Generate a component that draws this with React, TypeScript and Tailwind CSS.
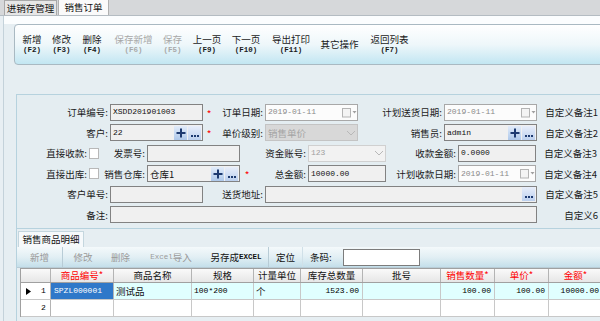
import React from "react";

const CJK = "font-['Noto_Sans_CJK_SC','Noto_Sans',sans-serif]";
const MONO = "font-['Liberation_Mono','Noto_Sans_CJK_SC',monospace]";

function Lbl({ cls, t }: { cls: string; t: string }) {
  return (
    <div className={`${cls} shrink-0 text-right pr-[2px] text-[9.5px] leading-[12px] text-[#1a1a1a] whitespace-nowrap`}>
      {t}
    </div>
  );
}

function Star({ cls }: { cls: string }) {
  return <div className={`${cls} shrink-0 text-center text-[10px] leading-[10px] text-[#ff0000] pt-[3px]`}>*</div>;
}

function Plus() {
  return (
    <div className="w-[13px] h-[14px] bg-gradient-to-b from-[#e2ecfa] to-[#aec8ea] flex items-center justify-center">
      <svg width="10" height="10" viewBox="0 0 10 10">
        <path d="M5 0.5v9M0.5 5h9" stroke="#1d3a70" strokeWidth="2" />
      </svg>
    </div>
  );
}

function Dots() {
  return (
    <div className="w-[13px] h-[14px] bg-gradient-to-b from-[#e8eefa] to-[#bcd0ee] flex items-end justify-center pb-[3px] gap-[1px]">
      <div className="w-[2px] h-[2px] bg-[#1d3a70]" />
      <div className="w-[2px] h-[2px] bg-[#1d3a70]" />
      <div className="w-[2px] h-[2px] bg-[#1d3a70]" />
    </div>
  );
}

function CalIcon() {
  return (
    <svg width="16" height="11" viewBox="0 0 16 11" className="shrink-0">
      <rect x="1.5" y="1.5" width="8" height="8.5" fill="#f4f4f4" stroke="#b4b4b4" />
      <path d="M11.5 4h4l-2 2.5z" fill="#a0a0a0" />
    </svg>
  );
}

function Chev() {
  return (
    <svg width="12" height="8" viewBox="0 0 12 8" className="shrink-0">
      <path d="M2 2l4 4 4-4" fill="none" stroke="#b8b8b8" strokeWidth="1" />
    </svg>
  );
}

function Field({ cls, children }: { cls: string; children?: React.ReactNode }) {
  return (
    <div className={`${cls} shrink-0 h-[17px] border border-[#828282] bg-[#f0f0f0] flex items-center pl-[2px] pr-[1px] overflow-hidden`}>
      {children}
    </div>
  );
}

function Val({ t }: { t: string }) {
  return <span className={`${MONO} text-[8px] leading-[10px] text-[#111] flex-1 whitespace-nowrap`}>{t}</span>;
}

function DateF({ cls }: { cls: string }) {
  return (
    <div className={`${cls} shrink-0 h-[17px] border border-[#a8a8a8] bg-[#fcfcfc] flex items-center pl-[2px] overflow-hidden`}>
      <span className={`${MONO} text-[8px] leading-[10px] text-[#8a8a8a] flex-1 whitespace-nowrap`}>2019-01-11</span>
      <CalIcon />
    </div>
  );
}

function Check() {
  return <div className="w-[10px] h-[11px] shrink-0 border border-[#b8b8b8] bg-white" />;
}

function RightLbl({ t }: { t: string }) {
  return (
    <div className="w-[61px] shrink-0 text-right text-[9.5px] leading-[12px] text-[#1a1a1a] whitespace-nowrap">{t}</div>
  );
}

function TB({ cls, a, b, dis }: { cls: string; a: string; b?: string; dis?: boolean }) {
  const c = dis ? "text-[#a8a8a8]" : "text-[#1a1a1a]";
  return (
    <div className={`${cls} shrink-0 flex flex-col items-center justify-center ${c}`}>
      <div className="h-[11.5px] text-[9.5px] leading-[11.5px] whitespace-nowrap">{a}</div>
      {b && <div className={`${MONO} h-[9px] text-[7.5px] leading-[9px] font-bold whitespace-nowrap`}>{b}</div>}
    </div>
  );
}

function Row({ children }: { children: React.ReactNode }) {
  return <div className="h-[20.5px] flex items-center">{children}</div>;
}

export default function App() {
  return (
    <div className={`${CJK} w-[600px] h-[321px] overflow-hidden bg-[#e8eff3] flex flex-col`}>
      {/* tab bar */}
      <div className="h-[16px] shrink-0 bg-[#d6d8da] border-b border-[#b4bcc2] flex items-end pl-[4px]">
        <div className="h-[15px] w-[53px] border border-b-0 border-[#a8a8a8] bg-[#e6e6e6] text-[9.5px] leading-[14px] text-center text-[#111]">
          进销存管理
        </div>
        <div className="h-[16px] w-[51px] ml-[1px] border border-b-0 border-[#b0b0b0] bg-[#fafafa] text-[9.5px] leading-[15px] text-center text-[#111]">
          销售订单
        </div>
      </div>

      <div className="flex-1 ml-[3px] border-l border-[#c4d2da] bg-[#e6eef2] flex flex-col">
        <div className="h-[8px] shrink-0 bg-[#fbfdfe]" />
        {/* main toolbar */}
        <div className="h-[41px] w-[600px] shrink-0 ml-[10px] rounded-l-[4px] border border-[#a9b9c2] bg-gradient-to-b from-[#ffffff] via-[#eef7fa] to-[#c2e6f2] flex items-center pl-[3px]">
          <TB cls="w-[28px]" a="新增" b="(F2)" />
          <TB cls="w-[31px]" a="修改" b="(F3)" />
          <TB cls="w-[30px]" a="删除" b="(F4)" />
          <TB cls="w-[53px]" a="保存新增" b="(F6)" dis />
          <TB cls="w-[25px]" a="保存" b="(F5)" dis />
          <TB cls="w-[44px]" a="上一页" b="(F9)" />
          <TB cls="w-[34px]" a="下一页" b="(F10)" />
          <TB cls="w-[56px]" a="导出打印" b="(F11)" />
          <TB cls="w-[41px]" a="其它操作" />
          <TB cls="w-[59px]" a="返回列表" b="(F7)" />
        </div>
        <div className="h-[29px] shrink-0" />

        {/* form panel */}
        <div className="h-[135px] w-[600px] shrink-0 ml-[12px] border border-[#b6d2de] bg-[#e4edf1] pt-[7px]">
          <Row>
            <Lbl cls="w-[93px]" t="订单编号:" />
            <Field cls="w-[93px]"><Val t="XSDD201901003" /></Field>
            <Star cls="w-[12px]" />
            <Lbl cls="w-[50px]" t="订单日期:" />
            <DateF cls="w-[93px]" />
            <Lbl cls="w-[86px]" t="计划送货日期:" />
            <DateF cls="w-[93px]" />
            <RightLbl t="自定义备注1" />
          </Row>
          <Row>
            <Lbl cls="w-[93px]" t="客户:" />
            <Field cls="w-[93px]"><Val t="22" /><Plus /><div className="w-[1px]" /><Dots /></Field>
            <Star cls="w-[12px]" />
            <Lbl cls="w-[50px]" t="单价级别:" />
            <div className="w-[93px] h-[17px] shrink-0 border border-[#c4c4c4] bg-[#d8d8d8] flex items-center pl-[2px]">
              <span className="flex-1 text-[9.5px] leading-[12px] text-[#a4a4a4]">销售单价</span>
              <Chev />
            </div>
            <Lbl cls="w-[86px]" t="销售员:" />
            <Field cls="w-[93px]"><Val t="admin" /><Plus /><div className="w-[1px]" /><Dots /></Field>
            <RightLbl t="自定义备注2" />
          </Row>
          <Row>
            <Lbl cls="w-[72px]" t="直接收款:" />
            <Check />
            <Lbl cls="w-[48px]" t="发票号:" />
            <Field cls="w-[93px]" />
            <Lbl cls="w-[68px]" t="资金账号:" />
            <div className="w-[78px] h-[17px] shrink-0 border border-[#d0d0d0] bg-[#f2f2f2] flex items-center pl-[2px]">
              <span className={`${MONO} flex-1 text-[8px] leading-[10px] text-[#a0a0a0]`}>123</span>
              <Chev />
            </div>
            <Lbl cls="w-[72px]" t="收款金额:" />
            <Field cls="w-[78px]"><Val t="0.0000" /></Field>
            <RightLbl t="自定义备注3" />
          </Row>
          <Row>
            <Lbl cls="w-[72px]" t="直接出库:" />
            <Check />
            <Lbl cls="w-[48px]" t="销售仓库:" />
            <Field cls="w-[93px]">
              <span className="flex-1 text-[9.5px] leading-[12px] text-[#111]">仓库1</span>
              <Plus /><div className="w-[1px]" /><Dots />
            </Field>
            <Star cls="w-[14px]" />
            <Lbl cls="w-[54px]" t="总金额:" />
            <Field cls="w-[78px]"><Val t="10000.00" /></Field>
            <Lbl cls="w-[72px]" t="计划收款日期:" />
            <DateF cls="w-[78px]" />
            <RightLbl t="自定义备注4" />
          </Row>
          <Row>
            <Lbl cls="w-[93px]" t="客户单号:" />
            <Field cls="w-[93px]" />
            <Lbl cls="w-[62px]" t="送货地址:" />
            <Field cls="w-[272px]"><div className="flex-1" /><Dots /></Field>
            <RightLbl t="自定义备注5" />
          </Row>
          <Row>
            <Lbl cls="w-[93px]" t="备注:" />
            <Field cls="w-[427px]" />
            <RightLbl t="自定义6" />
          </Row>
        </div>

        {/* detail */}
        <div className="flex-1 ml-[12px] border-l border-[#b6d2de] flex flex-col">
          <div className="h-[18px] shrink-0 flex items-end pl-[1px]">
            <div className="h-[16px] w-[66px] border border-b-0 border-[#c4d6de] bg-[#f6f9fb] text-[9.5px] leading-[15px] text-center text-[#111]">
              销售商品明细
            </div>
          </div>
          <div className="h-[21px] w-[600px] shrink-0 bg-gradient-to-b from-[#f4f9fb] via-[#e2eff4] to-[#c4dfea] border-b border-[#b8ccd6] flex items-center text-[9.5px] leading-[12px]">
            <div className="w-[46px] h-full flex items-center justify-center text-[#9a9a9a] border-r border-[#b8ccd6]">新增</div>
            <div className="w-[40px] h-full flex items-center justify-center text-[#9a9a9a]">修改</div>
            <div className="w-[35px] h-full flex items-center justify-center text-[#9a9a9a]">删除</div>
            <div className="w-[66px] h-full flex items-center justify-center text-[#9a9a9a]">
              <span className={`${MONO} text-[7.5px]`}>Excel</span>导入
            </div>
            <div className="w-[65px] h-full flex items-center justify-center text-[#111] border-r border-[#b8ccd6]">
              另存成<span className={`${MONO} text-[7.5px] font-bold`}>EXCEL</span>
            </div>
            <div className="w-[34px] h-full flex items-center justify-center text-[#111] border-r border-[#d0e0e8]">定位</div>
            <div className="ml-[7px] text-[#111]">条码:</div>
            <div className="ml-[11px] w-[77px] h-[17px] border border-[#7c7c7c] bg-white" />
          </div>

          {/* grid */}
          <div className="ml-[3px] w-[590px] border-l border-t border-[#a0a0a0] bg-white text-[9.5px] leading-[12px]">
            <div className="h-[14px] flex bg-gradient-to-b from-[#fafafa] to-[#e6e6e6] border-b border-[#a0a0a0]">
              <div className="w-[30px] shrink-0 border-r border-[#b4b4b4]" />
              <div className="w-[63px] shrink-0 border-r border-[#b4b4b4] text-center text-[#ff0000]">商品编号*</div>
              <div className="w-[78px] shrink-0 border-r border-[#b4b4b4] text-center text-[#111]">商品名称</div>
              <div className="w-[62px] shrink-0 border-r border-[#b4b4b4] text-center text-[#111]">规格</div>
              <div className="w-[47px] shrink-0 border-r border-[#b4b4b4] text-center text-[#111]">计量单位</div>
              <div className="w-[62px] shrink-0 border-r border-[#b4b4b4] text-center text-[#111]">库存总数量</div>
              <div className="w-[78px] shrink-0 border-r border-[#b4b4b4] text-center text-[#111]">批号</div>
              <div className="w-[54px] shrink-0 border-r border-[#b4b4b4] text-center text-[#ff0000]">销售数量*</div>
              <div className="w-[54px] shrink-0 border-r border-[#b4b4b4] text-center text-[#ff0000]">单价*</div>
              <div className="w-[54px] shrink-0 border-r border-[#b4b4b4] text-center text-[#ff0000]">金额*</div>
            </div>
            <div className="h-[17px] flex bg-[#e0ffff] border-b border-[#c8c8c8]">
              <div className="w-[30px] shrink-0 border-r border-[#b4b4b4] bg-white flex items-center pl-[5px]">
                <svg width="5" height="7" viewBox="0 0 5 7"><path d="M0 0l5 3.5L0 7z" fill="#000" /></svg>
                <span className={`${MONO} text-[8px] ml-[10px]`}>1</span>
              </div>
              <div className="w-[63px] shrink-0 border-r border-[#b4b4b4] bg-[#2f78c9] flex items-center pl-[3px]">
                <span className={`${MONO} text-[8px] text-white`}>SPZL000001</span>
              </div>
              <div className="w-[78px] shrink-0 border-r border-[#c8c8c8] flex items-center pl-[2px] text-[#111]">测试品</div>
              <div className="w-[62px] shrink-0 border-r border-[#c8c8c8] flex items-center pl-[2px]">
                <span className={`${MONO} text-[8px]`}>100*200</span>
              </div>
              <div className="w-[47px] shrink-0 border-r border-[#c8c8c8] flex items-center pl-[2px] text-[#111]">个</div>
              <div className="w-[62px] shrink-0 border-r border-[#c8c8c8] flex items-center justify-end pr-[3px]">
                <span className={`${MONO} text-[8px]`}>1523.00</span>
              </div>
              <div className="w-[78px] shrink-0 border-r border-[#c8c8c8]" />
              <div className="w-[54px] shrink-0 border-r border-[#c8c8c8] flex items-center justify-end pr-[3px]">
                <span className={`${MONO} text-[8px]`}>100.00</span>
              </div>
              <div className="w-[54px] shrink-0 border-r border-[#c8c8c8] flex items-center justify-end pr-[3px]">
                <span className={`${MONO} text-[8px]`}>100.00</span>
              </div>
              <div className="w-[54px] shrink-0 border-r border-[#c8c8c8] flex items-center justify-end pr-[3px]">
                <span className={`${MONO} text-[8px]`}>10000.00</span>
              </div>
            </div>
            <div className="h-[17px] flex bg-white border-b border-[#c8c8c8]">
              <div className="w-[30px] shrink-0 border-r border-[#b4b4b4] flex items-center pl-[20px]">
                <span className={`${MONO} text-[8px]`}>2</span>
              </div>
              <div className="w-[63px] shrink-0 border-r border-[#c8c8c8]" />
              <div className="w-[78px] shrink-0 border-r border-[#c8c8c8]" />
              <div className="w-[62px] shrink-0 border-r border-[#c8c8c8]" />
              <div className="w-[47px] shrink-0 border-r border-[#c8c8c8]" />
              <div className="w-[62px] shrink-0 border-r border-[#c8c8c8]" />
              <div className="w-[78px] shrink-0 border-r border-[#c8c8c8]" />
              <div className="w-[54px] shrink-0 border-r border-[#c8c8c8]" />
              <div className="w-[54px] shrink-0 border-r border-[#c8c8c8]" />
              <div className="w-[54px] shrink-0 border-r border-[#c8c8c8]" />
            </div>
          </div>
        </div>
      </div>
    </div>
  );
}
